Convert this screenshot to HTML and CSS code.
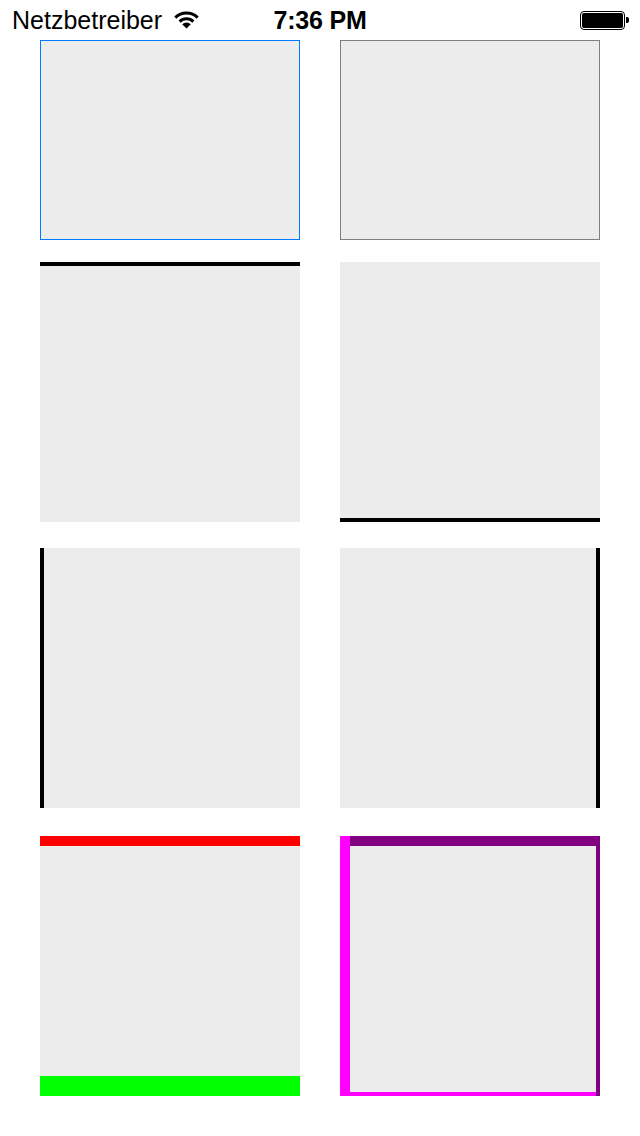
FILE: index.html
```html
<!DOCTYPE html>
<html lang="de">
<head>
<meta charset="utf-8">
<title>Borders</title>
<link rel="stylesheet" href="styles.css">
</head>
<body>
<div class="status-bar">
  <div class="status-left">
    <span class="carrier">Netzbetreiber</span>
    <svg class="wifi" width="25" height="18" viewBox="0 0 25 18">
      <path d="M1.3 6.6A16 16 0 0 1 23.7 6.6" fill="none" stroke="#000" stroke-width="3"/>
      <path d="M5.6 10.6A10 10 0 0 1 19.4 10.6" fill="none" stroke="#000" stroke-width="3"/>
      <path d="M8.2 13.2A6 6 0 0 1 16.8 13.2L12.5 17.6Z" fill="#000"/>
    </svg>
  </div>
  <span class="time">7:36 PM</span>
  <div class="status-right">
    <div class="battery"><div class="battery-level"></div></div>
    <div class="battery-nub"></div>
  </div>
</div>
<main class="board">
  <div class="row row-1">
    <div class="box box-blue"></div>
    <div class="box box-gray"></div>
  </div>
  <div class="row row-2">
    <div class="box tall edge-top"></div>
    <div class="box tall edge-bottom"></div>
  </div>
  <div class="row row-3">
    <div class="box tall edge-left"></div>
    <div class="box tall edge-right"></div>
  </div>
  <div class="row row-4">
    <div class="box tall red-green"></div>
    <div class="box tall multi"></div>
  </div>
</main>
</body>
</html>
```
FILE: styles.css
```css
* {
  box-sizing: border-box;
}

html,
body {
  margin: 0;
  padding: 0;
  background: #fff;
}

body {
  width: 640px;
  height: 1136px;
  overflow: hidden;
  font-family: "Liberation Sans", Arial, sans-serif;
  color: #000;
}

.status-bar {
  height: 40px;
  display: grid;
  grid-template-columns: 1fr auto 1fr;
  align-items: center;
  padding: 0 11px 0 12px;
}

.status-left {
  display: flex;
  align-items: center;
  gap: 12px;
}

.carrier {
  font-size: 25px;
  line-height: 40px;
}

.wifi {
  display: block;
}

.time {
  margin-left: -1px;
  font-size: 25px;
  font-weight: 700;
  line-height: 40px;
  letter-spacing: -0.2px;
}

.status-right {
  display: flex;
  align-items: center;
  justify-content: flex-end;
  gap: 1px;
}

.battery {
  width: 45px;
  height: 19px;
  padding: 1px;
  border: 1px solid #000;
  border-radius: 4px;
}

.battery-level {
  height: 100%;
  background: #000;
  border-radius: 2px;
}

.battery-nub {
  width: 3px;
  height: 6px;
  background: #000;
  border-radius: 0 2px 2px 0;
}

.board {
  display: flex;
  flex-direction: column;
  padding: 0 40px;
}

.row {
  display: flex;
  justify-content: space-between;
}

.row-2 {
  margin-top: 22px;
}

.row-3 {
  margin-top: 26px;
}

.row-4 {
  margin-top: 28px;
}

.box {
  width: 260px;
  height: 200px;
  background-color: #ececec;
}

.tall {
  height: 260px;
}

.box-blue {
  border: 1px solid #007aff;
}

.box-gray {
  border: 1px solid #808080;
}

.edge-top {
  border-top: 4px solid #000;
}

.edge-bottom {
  border-bottom: 4px solid #000;
}

.edge-left {
  border-left: 4px solid #000;
}

.edge-right {
  border-right: 4px solid #000;
}

.red-green {
  border-top: 10px solid #f00;
  border-bottom: 20px solid #0f0;
}

.multi {
  background-image:
    linear-gradient(#800080, #800080),
    linear-gradient(#800080, #800080),
    linear-gradient(#f0f, #f0f),
    linear-gradient(#f0f, #f0f);
  background-repeat: no-repeat;
  background-position: right top, right top, left top, left bottom;
  background-size: 250px 10px, 4px 260px, 10px 260px, 256px 4px;
}
```
